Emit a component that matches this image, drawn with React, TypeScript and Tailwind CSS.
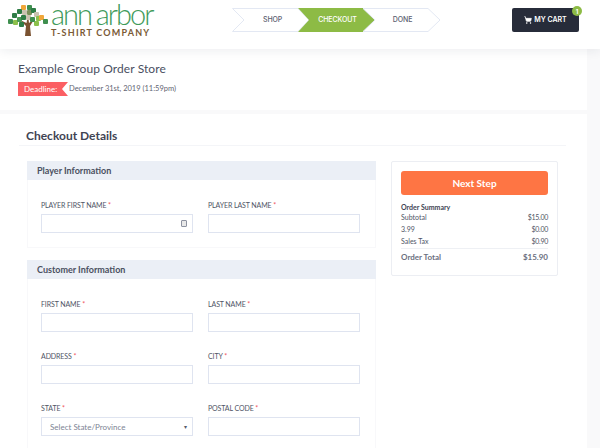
import { ReactNode } from "react";
import { ShoppingCart } from "lucide-react";

const LEAVES = [
  ["#3f8f4f", 8, 19], ["#8cc04b", 13, 20], ["#2f7d46", 12, 13], ["#4b9a55", 17, 17], ["#f0a73a", 21, 5],
  ["#3f8f4f", 27, 5], ["#2f7d46", 17, 9], ["#c9c2b0", 22, 10], ["#7a8f5a", 27, 10], ["#2f7d46", 31, 8],
  ["#c9c2b0", 34, 12], ["#8cc04b", 36, 16], ["#f0a73a", 39, 15], ["#3f8f4f", 43, 19], ["#8cc04b", 34, 21],
  ["#2f7d46", 21, 15], ["#c9c2b0", 26, 15], ["#3f8f4f", 30, 17], ["#2f7d46", 19, 22],
] as const;

function Tree() {
  return (
    <svg width="40" height="32" viewBox="8 5 40 32" className="mt-[5px] shrink-0">
      <path d="M25 36 L26 26 L20 20 L26.5 23 L28 15 L29 23 L35 18 L30 26 L31 36 Z" fill="#7a5230" />
      {LEAVES.map(([c, x, y], i) => (
        <rect key={i} x={x} y={y} width="5" height="5" rx="1" fill={c} />
      ))}
    </svg>
  );
}

function Stepper() {
  return (
    <div className="relative h-6 w-[209px] font-['Inter',sans-serif] text-[7px] font-medium tracking-[-0.1px]">
      <svg width="209" height="24" viewBox="0 0 209 24" className="absolute inset-0">
        <path d="M0.5 0.5 H66 L77 12 L66 23.5 H0.5 L12 12 Z" fill="#fff" stroke="#e3e8f3" />
        <path d="M66 0 H131 L143 12 L131 24 H66 L77 12 Z" fill="#8dbb45" />
        <path d="M131 0.5 H196 L208 12 L196 23.5 H131 L143 12 Z" fill="#fff" stroke="#e3e8f3" />
      </svg>
      <div className="relative flex h-6 items-center">
        <span className="ml-[31px] text-[#5c6170]">SHOP</span>
        <span className="ml-[36px] text-white">CHECKOUT</span>
        <span className="ml-[36px] text-[#5c6170]">DONE</span>
      </div>
    </div>
  );
}

function Field({ label, select, icon }: { label: string; select?: boolean; icon?: boolean }) {
  return (
    <div className="w-[152px]">
      <p className="text-[7px] leading-3 tracking-[-0.1px] text-[#4f5566] uppercase">
        {label} <span className="text-[#f0525a]">*</span>
      </p>
      <div className="mt-[3px] flex h-[19px] items-center justify-between border border-[#dfe4f0] bg-white pr-[5px] pl-2">
        {select && <span className="text-[8px] text-[#7d8494]">Select State/Province</span>}
        {select && <span className="text-[6px] text-[#555b6a]">▾</span>}
        {icon && <span className="ml-auto h-[7px] w-[6px] rounded-[1px] border border-[#8d92a0] bg-[#e8e8e8]" />}
      </div>
    </div>
  );
}

function Section({ title, children }: { title: string; children: ReactNode }) {
  return (
    <section>
      <h3 className="flex h-[19px] items-center bg-[#ebeff6] pl-[10px] text-[9px] font-bold text-[#4a4f5f]">
        {title}
      </h3>
      <div className="flex flex-col gap-[18px] border-x border-b border-[#f8f8fa] pt-[19px] pb-[14px] pl-[13px]">
        {children}
      </div>
    </section>
  );
}

function SummaryRow({ label, value }: { label: string; value: string }) {
  return (
    <div className="flex h-3 items-center justify-between text-[7px] text-[#4f5566]">
      <span>{label}</span>
      <span className="tracking-[-0.3px]">{value}</span>
    </div>
  );
}

export default function App() {
  return (
    <div className="h-[448px] w-[600px] overflow-hidden bg-[#f9f9fa] font-['Lato',sans-serif]">
      {/* Header */}
      <header className="relative z-10 flex h-[49px] items-start bg-white pl-2 shadow-[0_2px_10px_rgba(30,40,60,0.08)]">
        <div className="flex w-[224px] items-start">
          <Tree />
          <div className="ml-[3px]">
            <p className="text-[29px] leading-[27px] font-light tracking-[-2px] [word-spacing:-1px] whitespace-nowrap text-[#3f9b5b]">
              ann arbor
            </p>
            <p className="mt-px text-[9px] leading-[9px] font-bold tracking-[1.2px] whitespace-nowrap text-[#7a5a35]">
              T-SHIRT COMPANY
            </p>
          </div>
        </div>
        <div className="mt-2 flex">
          <Stepper />
          <div className="relative ml-[71px] flex h-6 w-[67px] items-center justify-center gap-[2px] rounded-[2px] bg-[#272c3a] font-['Inter',sans-serif] text-[7px] font-semibold text-white">
            <ShoppingCart size={8} fill="white" strokeWidth={2} />
            MY CART
            <span className="absolute -top-[2px] -right-[3px] flex h-[10px] w-[10px] items-center justify-center rounded-full bg-[#8dbb45] text-[6px] font-bold">
              1
            </span>
          </div>
        </div>
      </header>

      {/* Store banner */}
      <div className="h-[61px] w-[587px] bg-white pt-[12px] pl-[18px]">
        <h1 className="text-[12px] leading-[15px] tracking-[0.1px] text-[#4a4f5f]">Example Group Order Store</h1>
        <div className="mt-[6px] flex items-center gap-[1px]">
          <span className="flex h-[14px] w-[50px] items-center bg-[#fb5f63] pl-[6px] text-[8px] text-white [clip-path:polygon(0_0,100%_0,88%_50%,100%_100%,0_100%)]">
            Deadline:
          </span>
          <span className="text-[7.5px] text-[#5f6472]">December 31st, 2019 (11:59pm)</span>
        </div>
      </div>

      {/* Checkout */}
      <main className="mt-1 h-[334px] w-[587px] bg-white pt-[14px]">
        <h2 className="mr-[21px] mb-[15px] ml-[19px] border-b border-[#f4f5f8] pb-[1px] pl-[7px] text-[12px] leading-[16px] font-bold text-[#3f4453]">
          Checkout Details
        </h2>
        <div className="flex pl-[27px]">
          <div className="flex w-[349px] flex-col gap-[12px]">
            <Section title="Player Information">
              <div className="flex gap-[15px]">
                <Field label="Player First Name" icon />
                <Field label="Player Last Name" />
              </div>
            </Section>
            <Section title="Customer Information">
              <div className="flex gap-[15px]">
                <Field label="First Name" />
                <Field label="Last Name" />
              </div>
              <div className="flex gap-[15px]">
                <Field label="Address" />
                <Field label="City" />
              </div>
              <div className="flex gap-[15px]">
                <Field label="State" select />
                <Field label="Postal Code" />
              </div>
            </Section>
          </div>

          {/* Order summary */}
          <aside className="ml-[15px] h-[115px] w-[167px] rounded-[2px] border border-[#eceef3] px-[9px] pt-[9px]">
            <button className="block h-6 w-full rounded-[3px] bg-[#fe7544] text-[10px] font-bold text-white">
              Next Step
            </button>
            <p className="mt-[8px] text-[7px] leading-[8px] font-bold text-[#3f4453]">Order Summary</p>
            <SummaryRow label="Subtotal" value="$15.00" />
            <SummaryRow label="3.99" value="$0.00" />
            <SummaryRow label="Sales Tax" value="$0.90" />
            <div className="mt-[1px] flex h-[17px] items-center justify-between border-t border-[#eef0f4] text-[8px] font-bold text-[#6b7080]">
              <span>Order Total</span>
              <span>$15.90</span>
            </div>
          </aside>
        </div>
      </main>
    </div>
  );
}
